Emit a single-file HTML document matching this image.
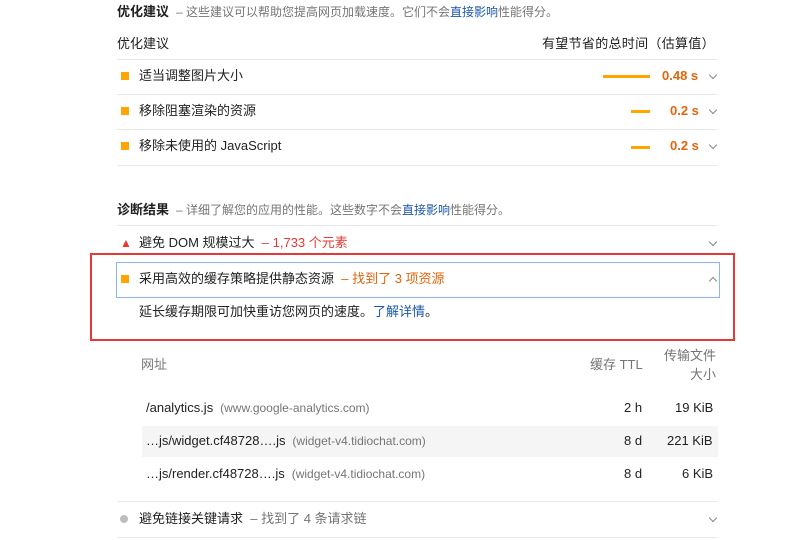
<!DOCTYPE html>
<html><head><meta charset="utf-8"><style>
body{margin:0;width:800px;height:540px;background:#fff;position:relative;overflow:hidden;font-family:"Liberation Sans","Noto Sans CJK SC",sans-serif;font-size:13px;color:#212121}
.a{position:absolute;white-space:nowrap;line-height:16px}
.l{position:absolute;height:1px;background:#e8e8e8}
.sq{position:absolute;width:8px;height:8px;background:#ffa400}
.or{color:#e0650b}
.v{font-weight:bold}
.g{color:#757575}
.ch{position:absolute;width:5px;height:5px;border-right:1px solid #888;border-bottom:1px solid #888;transform:rotate(45deg)}
.up{position:absolute;width:5px;height:5px;border-left:1px solid #888;border-top:1px solid #888;transform:rotate(45deg)}
.bar{position:absolute;height:3px;background:#ffa400}
a{color:#1a57a8;text-decoration:none}
</style></head><body>
<div class="a" style="left:117px;top:4px"><b>优化建议</b> <span class="g" style="font-size:12px">&nbsp;– 这些建议可以帮助您提高网页加载速度。它们不会<a>直接影响</a>性能得分。</span></div>
<div class="a" style="left:117px;top:36px">优化建议</div>
<div class="a" style="left:542px;top:36px;letter-spacing:0.3px">有望节省的总时间（估算值）</div>
<div class="l" style="left:117px;top:59px;width:600px"></div>
<div class="sq" style="left:121px;top:72px"></div><div class="a" style="left:139px;top:68px">适当调整图片大小</div>
<div class="bar" style="left:603px;top:75px;width:47px"></div><div class="a or v" style="left:662px;top:68px">0.48 s</div><div class="ch" style="left:710px;top:72px"></div>
<div class="l" style="left:117px;top:94px;width:600px"></div>
<div class="sq" style="left:121px;top:107px"></div><div class="a" style="left:139px;top:103px">移除阻塞渲染的资源</div>
<div class="bar" style="left:631px;top:110px;width:19px"></div><div class="a or v" style="left:670px;top:103px">0.2 s</div><div class="ch" style="left:710px;top:107px"></div>
<div class="l" style="left:117px;top:129px;width:600px"></div>
<div class="sq" style="left:121px;top:142px"></div><div class="a" style="left:139px;top:138px">移除未使用的 JavaScript</div>
<div class="bar" style="left:631px;top:146px;width:19px"></div><div class="a or v" style="left:670px;top:138px">0.2 s</div><div class="ch" style="left:710px;top:142px"></div>
<div class="l" style="left:117px;top:165px;width:600px"></div>

<div class="a" style="left:117px;top:202px"><b>诊断结果</b> <span class="g" style="font-size:12px">&nbsp;– 详细了解您的应用的性能。这些数字不会<a>直接影响</a>性能得分。</span></div>
<div class="l" style="left:117px;top:225px;width:600px"></div>
<div class="a" style="left:120px;top:235px;color:#e53935;font-size:12px">▲</div>
<div class="a" style="left:139px;top:235px">避免 DOM 规模过大 <span style="color:#e53935">&nbsp;– 1,733 个元素</span></div><div class="ch" style="left:710px;top:239px"></div>
<div style="position:absolute;left:90px;top:253px;width:641px;height:84px;border:2px solid #e53935"></div>
<div style="position:absolute;left:116px;top:262px;width:602px;height:34px;border:1px solid #8ab4f8"></div>
<div class="sq" style="left:121px;top:275px"></div>
<div class="a" style="left:139px;top:271px">采用高效的缓存策略提供静态资源 <span class="or">&nbsp;– 找到了 3 项资源</span></div><div class="up" style="left:710px;top:278px"></div>
<div class="a" style="left:139px;top:304px">延长缓存期限可加快重访您网页的速度。<a>了解详情</a>。</div>

<div class="a g" style="left:141px;top:357px">网址</div>
<div class="a g" style="left:590px;top:357px">缓存 TTL</div>
<div class="a g" style="left:664px;top:348px">传输文件</div>
<div class="a g" style="left:690px;top:367px">大小</div>
<div class="a" style="left:146px;top:400px">/analytics.js <span class="g" style="font-size:12px">&nbsp;(www.google-analytics.com)</span></div>
<div class="a" style="left:624px;top:400px">2 h</div><div class="a" style="left:675px;top:400px">19 KiB</div>
<div style="position:absolute;left:142px;top:426px;width:576px;height:31px;background:#f5f5f5"></div>
<div class="a" style="left:146px;top:433px">…js/widget.cf48728….js <span class="g" style="font-size:12px">&nbsp;(widget-v4.tidiochat.com)</span></div>
<div class="a" style="left:624px;top:433px">8 d</div><div class="a" style="left:667px;top:433px">221 KiB</div>
<div class="a" style="left:146px;top:466px">…js/render.cf48728….js <span class="g" style="font-size:12px">&nbsp;(widget-v4.tidiochat.com)</span></div>
<div class="a" style="left:624px;top:466px">8 d</div><div class="a" style="left:682px;top:466px">6 KiB</div>
<div class="l" style="left:117px;top:501px;width:600px"></div>
<div style="position:absolute;left:120px;top:515px;width:8px;height:8px;border-radius:50%;background:#bdbdbd"></div>
<div class="a" style="left:139px;top:511px">避免链接关键请求 <span class="g">&nbsp;– 找到了 4 条请求链</span></div><div class="ch" style="left:710px;top:515px"></div>
<div class="l" style="left:117px;top:537px;width:600px"></div>
</body></html>
